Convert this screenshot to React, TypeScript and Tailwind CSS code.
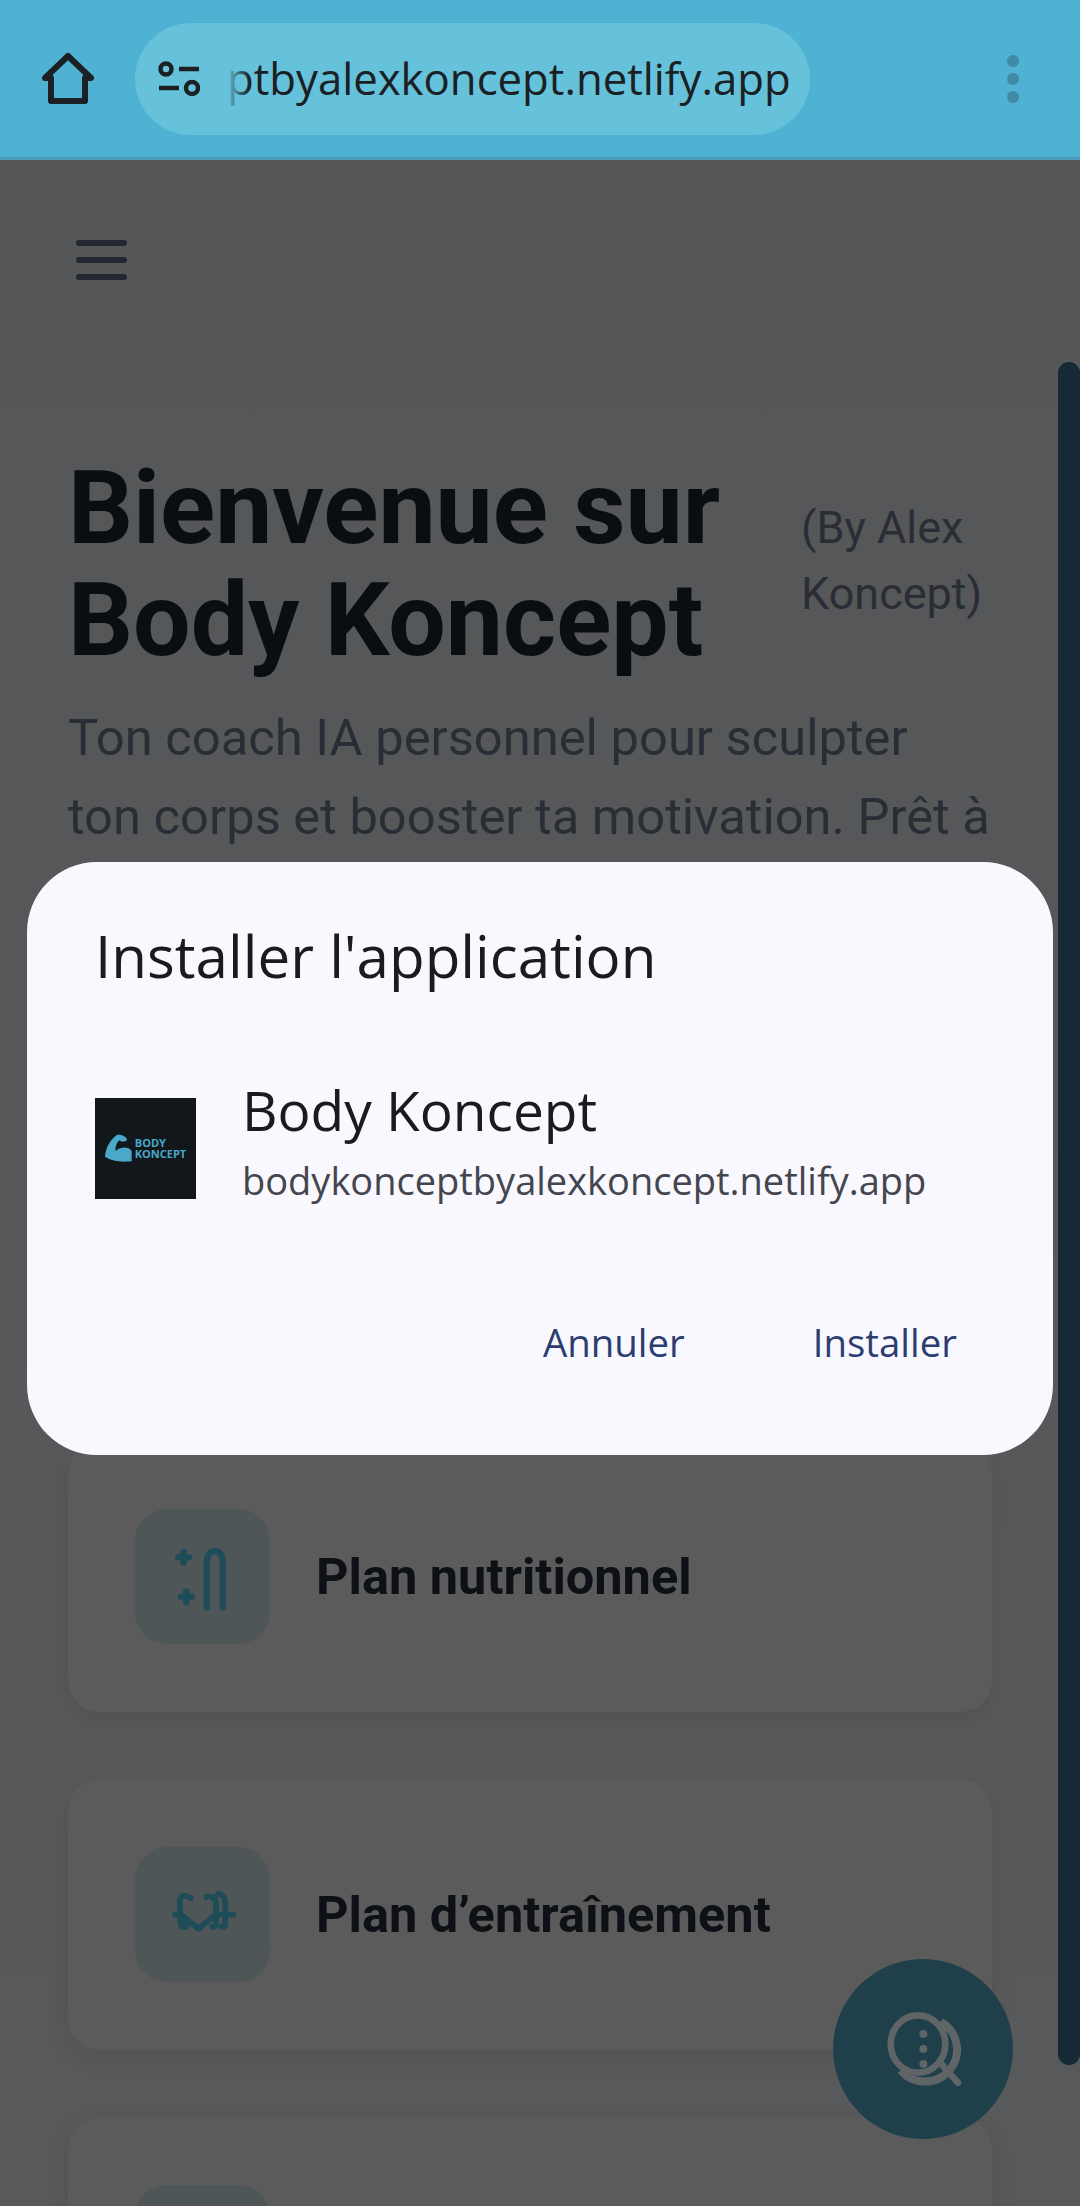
import React from 'react';

const uiFont = "font-['Open_Sans','Noto_Sans',sans-serif]";

function HomeIcon() {
  return (
    <svg width="56" height="56" viewBox="0 0 56 56" fill="none" className="shrink-0">
      <path d="M5 27 L28 5 L51 27 L45 27 L45 50 L11 50 L11 27 Z" stroke="#1a2023" strokeWidth="6" strokeLinejoin="round" />
    </svg>
  );
}

function TuneIcon() {
  return (
    <svg width="42" height="36" viewBox="0 0 42 36" fill="none" stroke="#1a2023" strokeWidth="4.5" className="shrink-0">
      <circle cx="8" cy="8" r="5.5" />
      <path d="M21 8 H41" />
      <path d="M1 27 H21" />
      <circle cx="34" cy="27" r="6" />
    </svg>
  );
}

function ArmLogo() {
  return (
    <svg width="27" height="28" viewBox="136 218 80 82" className="shrink-0">
      <path
        d="M172 220 C185 218 200 225 201 235 C195 243 183 240 178 236 C170 245 165 258 168 268 C178 256 205 252 215 268 L215 298 C195 300 180 300 165 297 C155 295 145 290 136 285 C138 260 150 235 172 220 Z"
        fill="#4aa8c8"
      />
    </svg>
  );
}

function NutritionIcon() {
  return (
    <svg width="135" height="135" viewBox="105 92 400 400" fill="none" stroke="#1e4c58" strokeWidth="19" className="shrink-0">
      <path d="M318 392 V250 C318 205 365 205 365 250 V392" />
      <path d="M233 235 H265 M249 219 V251" strokeLinecap="round" />
      <path d="M241 352 H273 M257 336 V368" strokeLinecap="round" />
    </svg>
  );
}

function WorkoutIcon() {
  return (
    <svg width="135" height="135" viewBox="105 84 400 400" fill="none" stroke="#1e4c58" strokeWidth="17" strokeLinecap="round" strokeLinejoin="round" className="shrink-0">
      <path d="M270 236 C250 222 236 228 238 250 L240 312 C242 320 248 322 256 320" />
      <path d="M224 284 C240 284 250 296 258 316" />
      <path d="M245 288 L293 326 L345 284" />
      <path d="M316 232 C336 226 348 240 345 262 L345 312 C345 320 340 322 334 320" />
      <path d="M350 224 C368 222 374 240 372 262 L372 312 C372 320 368 322 362 320" />
      <path d="M345 284 H396" />
    </svg>
  );
}

function AssistantIcon() {
  return (
    <svg width="78" height="78" viewBox="250 270 234 234" fill="none" stroke="#5f6466" className="shrink-0">
      <ellipse cx="352" cy="372" rx="82" ry="86" strokeWidth="20" />
      <path d="M420 305 A96 96 0 1 1 300 451" strokeWidth="24" />
      <path d="M425 435 L472 488" strokeWidth="20" strokeLinecap="round" />
      <circle cx="368" cy="342" r="12" fill="#5f6466" stroke="none" />
      <circle cx="368" cy="387" r="12" fill="#5f6466" stroke="none" />
      <circle cx="368" cy="432" r="12" fill="#5f6466" stroke="none" />
    </svg>
  );
}

function FeatureCard({ icon, title }: { icon?: React.ReactNode; title?: string }) {
  return (
    <div className="flex h-[271px] items-center gap-[46px] rounded-[32px] bg-[#5b5b5b] px-[67px] shadow-[0_8px_24px_rgba(0,0,0,0.08)]">
      <div className="flex size-[135px] shrink-0 items-center justify-center rounded-[32px] bg-[#4f5657]">{icon}</div>
      {title && <span className="text-[50.5px] font-bold text-[#0d1014]">{title}</span>}
    </div>
  );
}

export default function App() {
  return (
    <div className="relative h-[2206px] w-[1080px] overflow-hidden bg-gradient-to-b from-[#555657] to-[#58595a] font-['Roboto',sans-serif]">
      {/* browser toolbar */}
      <div className="flex h-[160px] items-center border-b-[3px] border-[#4a9cb8] bg-[#50b2d2] pl-[40px]">
        <HomeIcon />
        <div className={`relative ml-[39px] flex h-[112px] w-[675px] items-center rounded-full bg-[#66c1da] pl-[23px] ${uiFont}`}>
          <TuneIcon />
          <span className="ml-[27px] text-[43.7px] text-[#1a2023]">ptbyalexkoncept.netlify.app</span>
          <div className="absolute left-[91px] h-full w-[24px] bg-gradient-to-r from-[#66c1da] to-transparent" />
        </div>
        <div className="ml-auto mr-[61px] flex flex-col gap-[6px]">
          <div className="size-[12px] rounded-full bg-[#3f8aa4]" />
          <div className="size-[12px] rounded-full bg-[#3f8aa4]" />
          <div className="size-[12px] rounded-full bg-[#3f8aa4]" />
        </div>
      </div>

      {/* page behind the dialog */}
      <main className="pl-[68px] pr-[88px]">
        <div className="ml-[8px] flex flex-col gap-[11px] pt-[80px]">
          <div className="h-[6px] w-[51px] rounded-full bg-[#242732]" />
          <div className="h-[6px] w-[51px] rounded-full bg-[#242732]" />
          <div className="h-[6px] w-[51px] rounded-full bg-[#242732]" />
        </div>

        <div className="mt-[172px] flex items-start">
          <h1 className="w-[733px] shrink-0 text-[102px] leading-[112px] font-bold text-[#0a0e13]">
            Bienvenue sur
            <br />
            Body Koncept
          </h1>
          <p className="mt-[43px] text-[45px] leading-[66px] text-[#2b2d36]">
            (By Alex
            <br />
            Koncept)
          </p>
        </div>

        <p className="mt-[22px] text-[50.7px] leading-[79px] whitespace-nowrap text-[#2b2d36]">
          Ton coach IA personnel pour sculpter
          <br />
          ton corps et booster ta motivation. Prêt à
        </p>

        <div className="mt-[585px] flex flex-col gap-[67px]">
          <FeatureCard icon={<NutritionIcon />} title="Plan nutritionnel" />
          <FeatureCard icon={<WorkoutIcon />} title="Plan d’entraînement" />
          <FeatureCard />
        </div>
      </main>

      {/* scrollbar */}
      <div className="absolute right-0 top-[362px] h-[1703px] w-[22px] rounded-[11px] bg-[#152a35]" />

      {/* chat button */}
      <div className="absolute left-[833px] top-[1959px] flex size-[180px] items-center justify-center rounded-full bg-[#1f3f4b]">
        <AssistantIcon />
      </div>

      {/* install dialog */}
      <div className={`absolute left-[27px] top-[862px] flex h-[593px] w-[1026px] flex-col rounded-[70px] bg-[#f8f8fe] px-[68px] ${uiFont}`}>
        <h2 className="mt-[59px] text-[58.3px] leading-[70px] text-[#1a1b20]">Installer l'application</h2>
        <div className="mt-[83px] flex items-center gap-[46px]">
          <div className="flex size-[101px] shrink-0 items-center justify-center gap-[3px] bg-[#12171b]">
            <ArmLogo />
            <div className="text-[11px] leading-[11px] font-bold text-[#4aa8c8]">
              BODY
              <br />
              KONCEPT
            </div>
          </div>
          <div className="mb-[8px]">
            <div className="text-[55px] leading-[72px] text-[#1a1b20]">Body Koncept</div>
            <div className="text-[38px] leading-[68px] text-[#44464e]">bodykonceptbyalexkoncept.netlify.app</div>
          </div>
        </div>
        <div className="mt-auto mb-[88px] flex justify-end gap-[128px] pr-[28px] text-[38.4px] leading-[50px] font-medium text-[#2c3e70]">
          <span>Annuler</span>
          <span>Installer</span>
        </div>
      </div>
    </div>
  );
}
